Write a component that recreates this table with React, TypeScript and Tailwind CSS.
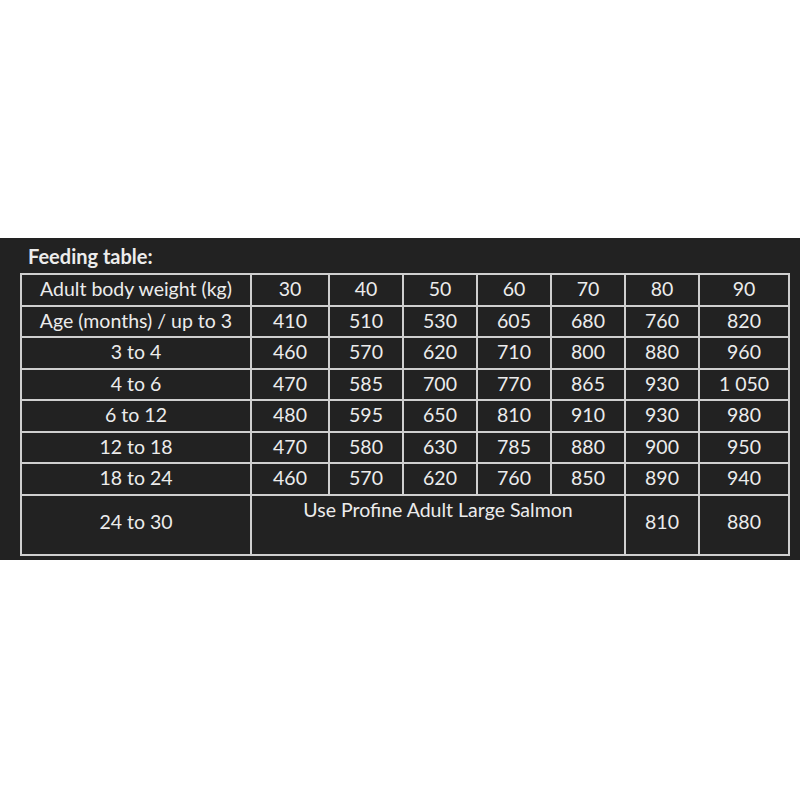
import React from "react";

const weights = ["30", "40", "50", "60", "70", "80", "90"];

const rows: { age: string; values: string[] }[] = [
  { age: "Age (months) / up to 3", values: ["410", "510", "530", "605", "680", "760", "820"] },
  { age: "3 to 4", values: ["460", "570", "620", "710", "800", "880", "960"] },
  { age: "4 to 6", values: ["470", "585", "700", "770", "865", "930", "1 050"] },
  { age: "6 to 12", values: ["480", "595", "650", "810", "910", "930", "980"] },
  { age: "12 to 18", values: ["470", "580", "630", "785", "880", "900", "950"] },
  { age: "18 to 24", values: ["460", "570", "620", "760", "850", "890", "940"] },
];

const cell = "border-2 border-[#cfcfcf] text-center align-middle p-0 pb-[2px] h-[31.5px]";
const lastCell = "border-2 border-[#cfcfcf] text-center align-middle p-0 pb-[6px]";

export default function App() {
  return (
    <div
      className="min-h-screen bg-white pt-[238px]"
      style={{ fontFamily: "Lato, 'Open Sans', sans-serif" }}
    >
      <div className="h-[322px] bg-[#222222] text-[#ececec]">
        <div className="pl-[28px] h-[35px] flex items-center text-[20px] font-bold">
          Feeding table:
        </div>
        <table className="ml-[20px] w-[768px] table-fixed border-collapse text-[19.5px] leading-none">
          <colgroup>
            <col className="w-[230px]" />
            <col className="w-[78px]" />
            <col className="w-[74px]" />
            <col className="w-[74px]" />
            <col className="w-[74px]" />
            <col className="w-[74px]" />
            <col className="w-[74px]" />
            <col className="w-[90px]" />
          </colgroup>
          <tbody>
            <tr>
              <td className={cell}>Adult body weight (kg)</td>
              {weights.map((w) => (
                <td key={w} className={cell}>
                  {w}
                </td>
              ))}
            </tr>
            {rows.map((row) => (
              <tr key={row.age}>
                <td className={cell}>{row.age}</td>
                {row.values.map((v, i) => (
                  <td key={i} className={cell}>
                    {v}
                  </td>
                ))}
              </tr>
            ))}
            <tr className="h-[60px]">
              <td className={lastCell}>24 to 30</td>
              <td colSpan={5} className="border-2 border-[#cfcfcf] text-center align-top pt-[4px]">
                Use Profine Adult Large Salmon
              </td>
              <td className={lastCell}>810</td>
              <td className={lastCell}>880</td>
            </tr>
          </tbody>
        </table>
      </div>
    </div>
  );
}
